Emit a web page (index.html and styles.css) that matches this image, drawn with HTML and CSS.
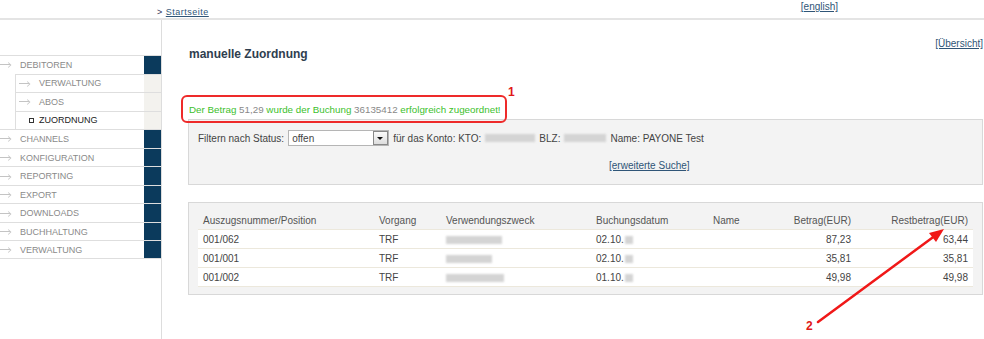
FILE: index.html
```html
<!DOCTYPE html>
<html lang="de">
<head>
  <meta charset="UTF-8">
  <title>manuelle Zuordnung</title>
  <link rel="stylesheet" href="styles.css">
</head>
<body>
    <div class="topbar">
        <div class="crumb">&gt; <a href="#">Startseite</a></div>
        <a class="lang" href="#">[english]</a>
    </div>

    <div class="layout">
        <div class="sidebar">
            <div class="menu-item open"><span class="arr"></span>DEBITOREN<span class="tab"></span></div>
            <div class="submenu">
                <div class="menu-item sub"><span class="arr"></span>VERWALTUNG<span class="tab"></span></div>
                <div class="menu-item sub"><span class="arr"></span>ABOS<span class="tab"></span></div>
                <div class="menu-item sub active"><span class="dot"></span>ZUORDNUNG<span class="tab"></span></div>
            </div>
            <div class="menu-item"><span class="arr"></span>CHANNELS<span class="tab"></span></div>
            <div class="menu-item"><span class="arr"></span>KONFIGURATION<span class="tab"></span></div>
            <div class="menu-item"><span class="arr"></span>REPORTING<span class="tab"></span></div>
            <div class="menu-item"><span class="arr"></span>EXPORT<span class="tab"></span></div>
            <div class="menu-item"><span class="arr"></span>DOWNLOADS<span class="tab"></span></div>
            <div class="menu-item"><span class="arr"></span>BUCHHALTUNG<span class="tab"></span></div>
            <div class="menu-item last"><span class="arr"></span>VERWALTUNG<span class="tab"></span></div>
        </div>

        <div class="main">
            <div class="page-head">
                <h1>manuelle Zuordnung</h1>
                <a href="#">[Übersicht]</a>
            </div>

            <p class="success">Der Betrag <span>51,29</span> wurde der Buchung <span>36135412</span> erfolgreich zugeordnet!</p>

            <div class="box filter">
                <div class="filter-row">
                    <span>Filtern nach Status:</span>
                    <div class="select"><span>offen</span><span class="select-btn"></span></div>
                    <span>für das Konto: KTO:</span><span class="blur" style="width:50px"></span>
                    <span>BLZ:</span><span class="blur" style="width:42px"></span>
                    <span>Name: PAYONE Test</span>
                </div>
                <div class="more"><a href="#">[erweiterte Suche]</a></div>
            </div>

            <div class="box list">
                <table>
                    <thead>
                        <tr>
                            <th class="c1">Auszugsnummer/Position</th>
                            <th class="c2">Vorgang</th>
                            <th class="c3">Verwendungszweck</th>
                            <th class="c4">Buchungsdatum</th>
                            <th class="c5">Name</th>
                            <th class="num c6">Betrag(EUR)</th>
                            <th class="num">Restbetrag(EUR)</th>
                        </tr>
                    </thead>
                    <tbody>
                        <tr>
                            <td>001/062</td><td>TRF</td><td><span class="blur" style="width:56px"></span></td>
                            <td>02.10.<span class="blur small"></span></td><td></td><td class="num">87,23</td><td class="num">63,44</td>
                        </tr>
                        <tr>
                            <td>001/001</td><td>TRF</td><td><span class="blur" style="width:46px"></span></td>
                            <td>02.10.<span class="blur small"></span></td><td></td><td class="num">35,81</td><td class="num">35,81</td>
                        </tr>
                        <tr>
                            <td>001/002</td><td>TRF</td><td><span class="blur" style="width:58px"></span></td>
                            <td>01.10.<span class="blur small"></span></td><td></td><td class="num">49,98</td><td class="num">49,98</td>
                        </tr>
                    </tbody>
                </table>
            </div>
        </div>
    </div>

    <!-- red annotations drawn over the screenshot -->
    <div class="mark-box"></div>
    <span class="mark-num one">1</span>
    <span class="mark-num two">2</span>
    <svg class="mark-arrow" width="984" height="339" viewBox="0 0 984 339">
        <line x1="818" y1="322" x2="936" y2="235" stroke="#f01818" stroke-width="2.5" stroke-linecap="round"/>
        <polygon points="944,229 929,233 936,242" fill="#f01818"/>
    </svg>
</body>
</html>
```

FILE: styles.css
```css
body {
    margin: 0;
    font-family: 'Liberation Sans', Arial, sans-serif;
    font-size: 10px;
    color: #444;
    background: #fff;
    position: relative;
    height: 339px;
    overflow: hidden;
}

a {
    color: #2f5577;
    text-decoration: underline;
}

.topbar {
    height: 18px;
    border-bottom: 2px solid #e4e4e4;
    display: flex;
    align-items: flex-start;
}

.crumb {
    margin-left: 157px;
    padding-top: 7px;
    font-size: 9px;
    color: #335;
    letter-spacing: 0.5px;
}

.lang {
    margin-left: 592px;
    padding-top: 1px;
    font-size: 10px;
}

.layout {
    display: grid;
    grid-template-columns: 162px 1fr;
    height: 319px;
}

.sidebar {
    border-right: 1px solid #ddd;
    padding-top: 35px;
}

.menu-item {
    display: flex;
    align-items: center;
    height: 18.55px;
    box-sizing: border-box;
    border-top: 1px solid #dedede;
    font-size: 9px;
    color: #8a8a8a;
}

.menu-item.last {
    border-bottom: 1px solid #dedede;
}

.menu-item .arr {
    width: 13px;
    height: 5px;
    margin: 0 7px 0 0;
    background:
        linear-gradient(#c4c4c4, #c4c4c4) 0 2px / 10px 1px no-repeat;
    position: relative;
}

.menu-item .arr::after {
    content: "";
    position: absolute;
    right: 2px;
    top: 0;
    width: 4px;
    height: 4px;
    border-top: 1px solid #c4c4c4;
    border-right: 1px solid #c4c4c4;
    transform: translate(0, 0.5px) rotate(45deg) scale(0.8);
}

.menu-item .tab {
    margin-left: auto;
    width: 17px;
    align-self: stretch;
    background: #0b3a5c;
}

.submenu {
    margin-left: 15px;
    border-left: 1px solid #dedede;
}

.menu-item.sub {
    padding-left: 3px;
}

.menu-item.sub .tab {
    background: #f3f2ee;
}

.menu-item.active {
    color: #222;
    padding-left: 13px;
}

.menu-item .dot {
    width: 3px;
    height: 3px;
    border: 1px solid #333;
    margin-right: 5px;
}

.main {
    padding: 0 1px 0 26px;
}

.page-head {
    display: flex;
    justify-content: space-between;
    align-items: flex-start;
    padding-top: 18px;
}

.page-head h1 {
    margin: 9px 0 0 1px;
    font-size: 12px;
    color: #2f3e4e;
}

.page-head a {
    font-size: 10px;
}

.success {
    margin: 43px 0 4px 1px;
    font-size: 9.8px;
    color: #3cbf2c;
}

.success span {
    color: #888;
}

.box {
    background: #f3f3f3;
    border: 1px solid #d8d8d8;
}

.filter {
    height: 66px;
    padding: 10px 0 0 9px;
    box-sizing: border-box;
    margin-bottom: 17px;
}

.filter-row {
    display: flex;
    align-items: center;
    gap: 4px;
    color: #444;
}

.select {
    width: 99px;
    height: 14px;
    border: 1px solid #b5b5b5;
    background: #fff;
    display: flex;
    align-items: center;
    margin: 0 0 0 0;
}

.select span:first-child {
    flex: 1;
    padding-left: 3px;
}

.select-btn {
    width: 13px;
    height: 12px;
    border: 1px solid #888;
    background: linear-gradient(#fafafa, #ddd);
    position: relative;
}

.select-btn::after {
    content: "";
    position: absolute;
    left: 3px;
    top: 5px;
    border-left: 3.5px solid transparent;
    border-right: 3.5px solid transparent;
    border-top: 3.5px solid #111;
}

.blur {
    display: inline-block;
    height: 8px;
    background: #d4d4d4;
    filter: blur(1px);
    vertical-align: middle;
}

.blur.small {
    width: 8px;
    margin-left: 1px;
}

.more {
    margin: 14px 0 0 411px;
}

.list {
    padding: 8px 9px 7px 9px;
}

table {
    width: 100%;
    border-collapse: collapse;
    font-size: 10px;
}

th {
    font-weight: normal;
    text-align: left;
    color: #555;
    height: 18px;
    padding: 0 5px;
}

td {
    background: #fff;
    height: 18px;
    padding: 0 5px;
    border-bottom: 1px solid #ece8dc;
    color: #444;
}

thead tr th {
    border-bottom: 1px solid #ece8dc;
}

.num {
    text-align: right;
}

.c1 { width: 166px; }
.c2 { width: 57px; }
.c3 { width: 140px; }
.c4 { width: 107px; }
.c5 { width: 40px; }
.c6 { width: 88px; }

.mark-box {
    position: absolute;
    left: 181px;
    top: 95px;
    width: 322px;
    height: 24px;
    border: 2px solid #ee2a2a;
    border-radius: 6px;
}

.mark-num {
    position: absolute;
    color: #e01818;
    font-weight: bold;
    font-size: 12px;
}

.mark-num.one {
    left: 508px;
    top: 85px;
}

.mark-num.two {
    left: 806px;
    top: 319px;
}

.mark-arrow {
    position: absolute;
    left: 0;
    top: 0;
    pointer-events: none;
}
```
